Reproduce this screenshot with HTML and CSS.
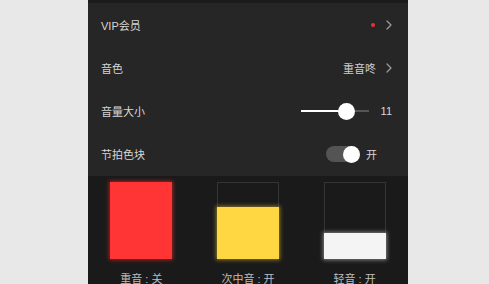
FILE: index.html
```html
<!DOCTYPE html>
<html>
<head>
<meta charset="utf-8">
<link rel="stylesheet" href="styles.css">
</head>
<body>
<div class="panel">
  <div class="topbar"></div>
  <div class="rows">
    <div class="row">
      <span class="label">VIP会员</span>
      <div class="right">
        <span class="dot"></span>
        <svg class="chev" width="6" height="10" viewBox="0 0 6 10"><polyline points="1,1 5,5 1,9" fill="none" stroke="#9a9a9a" stroke-width="1.3" stroke-linecap="round" stroke-linejoin="round"/></svg>
      </div>
    </div>
    <div class="row">
      <span class="label">音色</span>
      <div class="right">
        <span class="value">重音咚</span>
        <svg class="chev" width="6" height="10" viewBox="0 0 6 10"><polyline points="1,1 5,5 1,9" fill="none" stroke="#9a9a9a" stroke-width="1.3" stroke-linecap="round" stroke-linejoin="round"/></svg>
      </div>
    </div>
    <div class="row">
      <span class="label">音量大小</span>
      <div class="right">
        <div class="slider">
          <div class="fill" style="width:46px"></div>
          <div class="thumb" style="left:46px"></div>
        </div>
        <span class="num">11</span>
      </div>
    </div>
    <div class="row">
      <span class="label">节拍色块</span>
      <div class="right">
        <div class="toggle"><div class="knob"></div></div>
        <span class="onoff">开</span>
      </div>
    </div>
  </div>
  <div class="blocks">
    <div class="col">
      <div class="box"><div class="bar red" style="height:77px"></div></div>
      <div class="cap">重音 : 关</div>
    </div>
    <div class="col">
      <div class="box"><div class="bar yellow" style="height:52px"></div></div>
      <div class="cap">次中音 : 开</div>
    </div>
    <div class="col">
      <div class="box"><div class="bar white" style="height:26px"></div></div>
      <div class="cap">轻音 : 开</div>
    </div>
  </div>
</div>
</body>
</html>
```

FILE: styles.css
```css
html, body {
  margin: 0;
  padding: 0;
  background: #e8e8e8;
  height: 284px;
  overflow: hidden;
}
body {
  font-family: "Liberation Sans", "Noto Sans CJK SC", sans-serif;
  font-size: 11px;
  color: #d6d6d6;
}
.panel {
  margin-left: 88px;
  width: 320px;
  height: 284px;
  background: #262626;
  display: flex;
  flex-direction: column;
  overflow: hidden;
}
.topbar {
  flex-shrink: 0;
  height: 3px;
  background: #1b1b1b;
}
.rows {
  flex-shrink: 0;
  height: 173px;
  display: grid;
  grid-template-rows: repeat(4, 1fr);
}
.row {
  display: flex;
  align-items: center;
  justify-content: space-between;
  padding: 0 16px 0 13px;
}
.right {
  display: flex;
  align-items: center;
}
.dot {
  width: 4px;
  height: 4px;
  border-radius: 50%;
  background: #f03030;
  margin-right: 11px;
}
.value {
  color: #cfcfcf;
  margin-right: 10px;
}
.chev {
  display: block;
}
.slider {
  position: relative;
  width: 68px;
  height: 2px;
  background: #555;
  margin-right: 12px;
}
.fill {
  height: 2px;
  background: #fff;
}
.thumb {
  position: absolute;
  top: -7.5px;
  width: 17px;
  height: 17px;
  margin-left: -8.5px;
  border-radius: 50%;
  background: #fff;
}
.num {
  color: #d6d6d6;
}
.toggle {
  position: relative;
  width: 34px;
  height: 16px;
  border-radius: 8px;
  background: #545454;
  margin-right: 6px;
}
.knob {
  position: absolute;
  right: 0;
  top: -0.5px;
  width: 17px;
  height: 17px;
  border-radius: 50%;
  background: #fff;
}
.onoff {
  margin-right: 15px;
}
.blocks {
  flex: 1 1 auto;
  min-height: 0;
  background: #1a1a1a;
  display: grid;
  grid-template-columns: repeat(3, 1fr);
  align-content: start;
  padding-top: 6px;
}
.col {
  display: flex;
  flex-direction: column;
  align-items: center;
}
.box {
  width: 62px;
  height: 77px;
  box-shadow: inset 0 0 0 1px #343434;
  display: flex;
  flex-direction: column;
  justify-content: flex-end;
}
.bar {
  width: 62px;
}
.red {
  background: #ff3535;
  box-shadow: 0 0 4px 1px rgba(255, 50, 50, 0.55);
}
.yellow {
  background: #ffd743;
  box-shadow: 0 0 4px 1px rgba(255, 215, 60, 0.5);
}
.white {
  background: #f4f4f4;
  box-shadow: 0 0 4px 1px rgba(255, 255, 255, 0.45);
}
.cap {
  margin-top: 13px;
  line-height: 15px;
  color: #bdbdbd;
}
```
